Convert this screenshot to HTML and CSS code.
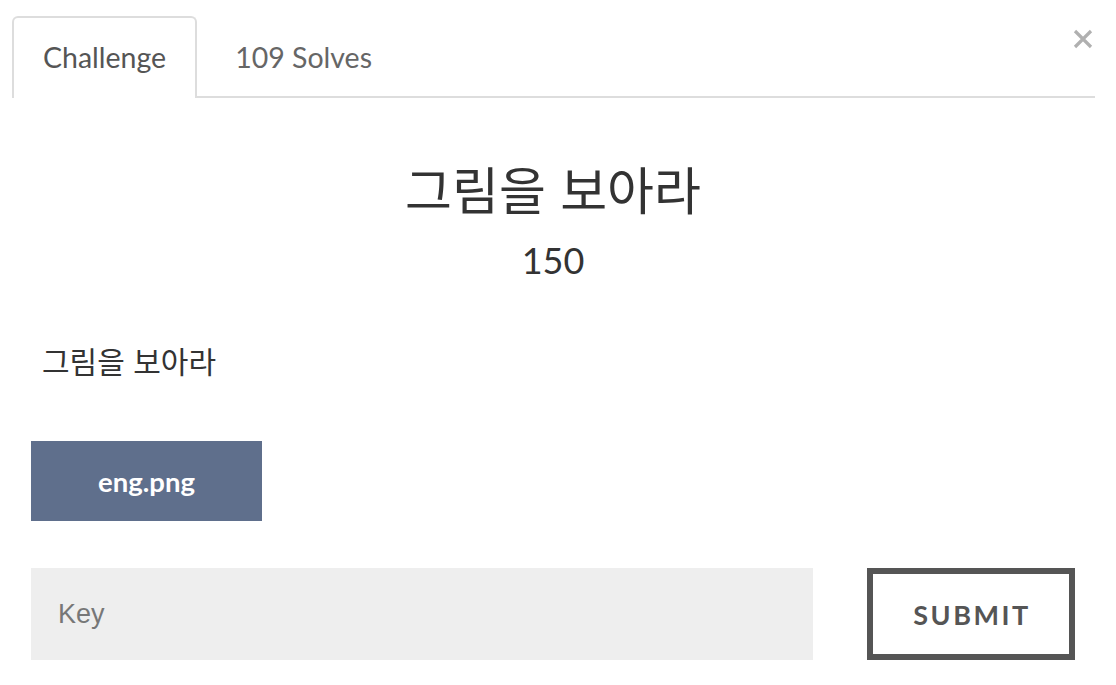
FILE: index.html
```html
<!DOCTYPE html>
<html lang="ko">
<head>
<meta charset="utf-8">
<title>Challenge</title>
<link rel="stylesheet" href="styles.css">
</head>
<body>
<div class="modal">
  <button class="close" aria-label="Close">
    <svg width="20" height="20" viewBox="0 0 20 20"><path d="M2 2 L18 18 M18 2 L2 18" stroke="#b0b0b0" stroke-width="3.2" stroke-linecap="butt"/></svg>
  </button>
  <nav class="tabs">
    <div class="tab active">Challenge</div>
    <div class="tab">109 Solves</div>
  </nav>
  <div class="body">
    <h1 class="title">그림을 보아라</h1>
    <h2 class="value">150</h2>
    <p class="desc">그림을 보아라</p>
    <div class="files">
      <a class="file-btn">eng.png</a>
    </div>
    <div class="submit-row">
      <div class="key-input">Key</div>
      <button class="submit">SUBMIT</button>
    </div>
  </div>
</div>
</body>
</html>
```
FILE: styles.css
```css
html, body {
  margin: 0;
  padding: 0;
  background: #fff;
}
body {
  font-family: Lato, "Noto Sans CJK KR", sans-serif;
  color: #333;
}
.modal {
  position: relative;
  width: 1116px;
  height: 685px;
  padding-top: 16px;
  box-sizing: border-box;
}
.close {
  position: absolute;
  top: 29px;
  left: 1073px;
  padding: 0;
  margin: 0;
  border: 0;
  background: none;
  width: 20px;
  height: 20px;
  display: block;
}
.close svg { display: block; }
.tabs {
  display: flex;
  margin: 0 21px 0 12px;
  border-bottom: 2px solid #ddd;
}
.tab {
  height: 80px;
  line-height: 78px;
  padding: 0 29px;
  border: 2px solid transparent;
  border-bottom: none;
  border-radius: 6px 6px 0 0;
  margin-bottom: -2px;
  font-size: 28.5px;
  color: #666;
}
.tab.active {
  border-color: #ddd;
  background: #fff;
  color: #555;
}
.tab + .tab {
  margin-left: 7px;
}
.body {
  margin: 0 41px 0 31px;
}
.title {
  margin: 62px 0 0;
  text-align: center;
  font-family: "Noto Sans CJK KR", sans-serif;
  font-weight: 400;
  font-size: 51px;
  line-height: 56px;
  color: #333;
}
.value {
  margin: 22px 0 0;
  text-align: center;
  font-family: Lato, sans-serif;
  font-weight: 400;
  font-size: 36px;
  line-height: 44px;
  color: #333;
}
.desc {
  margin: 60px 0 0 11px;
  font-family: "Noto Sans CJK KR", sans-serif;
  font-size: 30px;
  line-height: 36px;
  color: #333;
}
.files {
  margin-top: 63px;
  display: flex;
}
.file-btn {
  display: flex;
  align-items: center;
  justify-content: center;
  width: 231px;
  height: 80px;
  background: #5f6f8c;
  color: #fff;
  font-family: Lato, sans-serif;
  font-weight: 700;
  font-size: 27.5px;
}
.submit-row {
  margin-top: 47px;
  display: flex;
  gap: 54px;
}
.key-input {
  flex: 1;
  height: 92px;
  background: #eee;
  box-sizing: border-box;
  padding-left: 27px;
  display: flex;
  align-items: center;
  font-family: "Liberation Sans", Arial, sans-serif;
  font-size: 27px;
  color: #777;
}
.submit {
  width: 208px;
  height: 92px;
  box-sizing: border-box;
  border: 6px solid #555;
  background: #fff;
  color: #555;
  font-family: Lato, sans-serif;
  font-weight: 700;
  font-size: 27px;
  letter-spacing: 2.5px;
  padding: 0 0 0 2px;
  margin: 0;
}
```
